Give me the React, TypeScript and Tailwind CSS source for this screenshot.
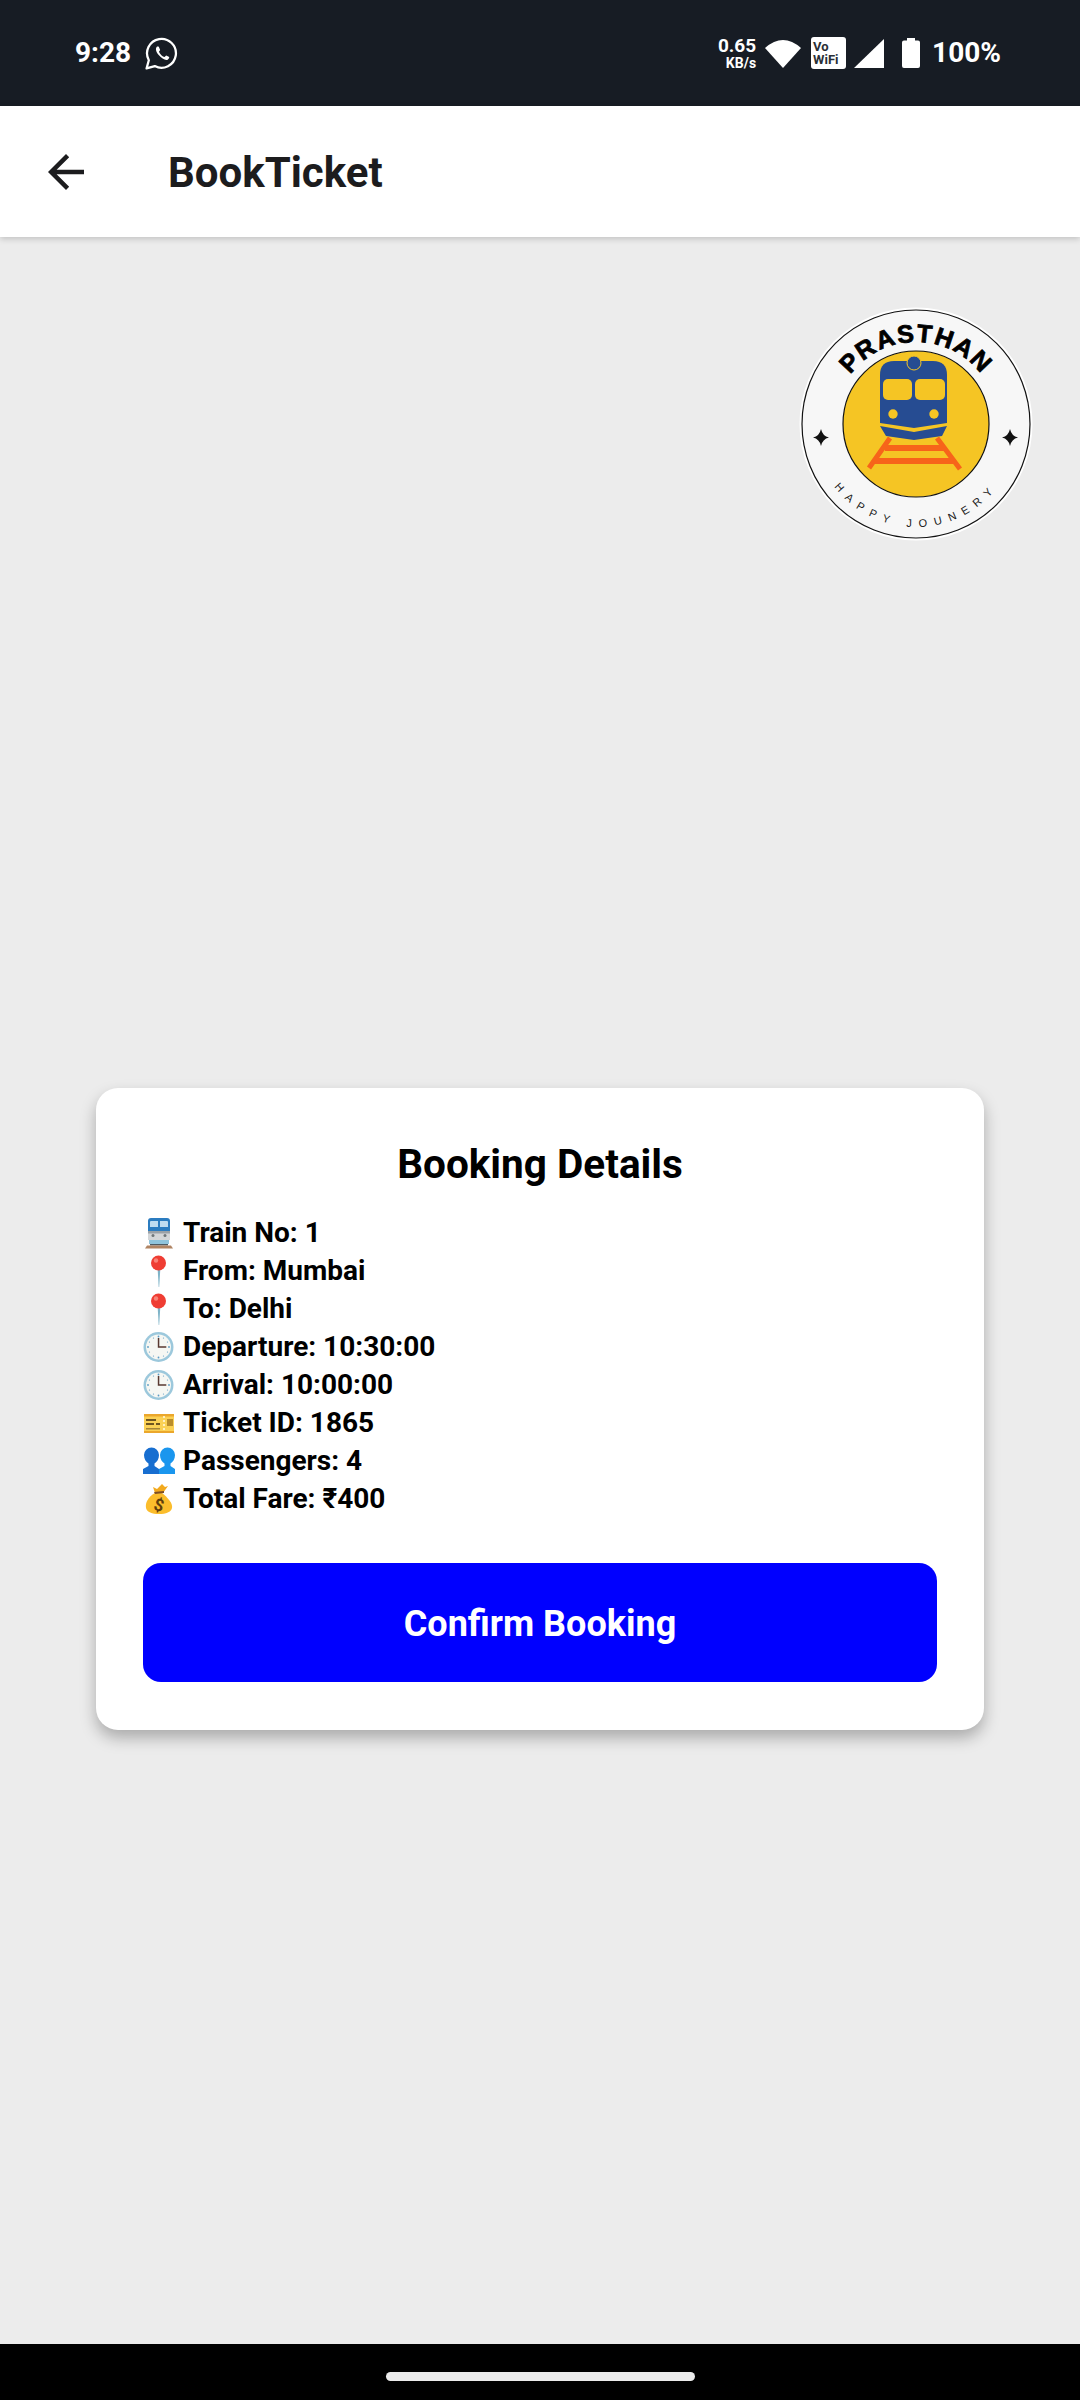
const ROWS = [
  { icon: 'train', label: 'Train No: 1' },
  { icon: 'pin', label: 'From: Mumbai' },
  { icon: 'pin', label: 'To: Delhi' },
  { icon: 'clock', label: 'Departure: 10:30:00' },
  { icon: 'clock', label: 'Arrival: 10:00:00' },
  { icon: 'ticket', label: 'Ticket ID: 1865' },
  { icon: 'people', label: 'Passengers: 4' },
  { icon: 'money', label: 'Total Fare: ₹400' },
];

function RowIcon({ name }: { name: string }) {
  if (name === 'train') {
    return (
      <svg viewBox="0 0 32 32" className="w-[32px] h-[32px]">
        <path d="M5 4q0-3 3-3h16q3 0 3 3v10H5z" fill="#2b7cc0" />
        <path d="M7 5q0-1 1-1h7v6H7zM17 4h7q1 0 1 1v5h-8z" fill="#bfdcf0" />
        <path d="M5 14h22v9H5z" fill="#d3d6d8" />
        <path d="M5 14h22v2.500H5z" fill="#9aa1a6" />
        <circle cx="10" cy="18.500" r="1.500" fill="#6f7679" />
        <circle cx="22" cy="18.500" r="1.500" fill="#6f7679" />
        <path d="M6 23h20v4H6z" fill="#8fc4dc" />
        <path d="M7 27h18v1.500H7z" fill="#4f5b62" />
        <path d="M4 28.500h24l2 3H2z" fill="#b08463" />
      </svg>
    );
  }
  if (name === 'pin') {
    return (
      <svg viewBox="0 0 32 32" className="w-[32px] h-[32px]">
        <path d="M14.600 13h2.800L16.200 32h-.5z" fill="#7fb4c8" />
        <circle cx="15.500" cy="8" r="7.500" fill="#ef3d33" />
        <circle cx="13" cy="5.500" r="2.200" fill="#f88378" />
      </svg>
    );
  }
  if (name === 'clock') {
    return (
      <svg viewBox="0 0 32 32" className="w-[32px] h-[32px]">
        <circle cx="15.500" cy="16" r="15" fill="#9cc8dc" />
        <circle cx="15.500" cy="16" r="12.500" fill="#f6f7f3" />
        <path d="M14.800 7h1.500v8.300h7v1.500h-8.500z" fill="#5a3a32" />
        <g fill="#5b9bc4">
          <circle cx="15.500" cy="5.500" r=".9" />
          <circle cx="15.500" cy="26.500" r=".9" />
          <circle cx="5" cy="16" r=".9" />
          <circle cx="26" cy="16" r=".9" />
          <circle cx="20.500" cy="7" r=".6" />
          <circle cx="24.500" cy="11" r=".6" />
          <circle cx="24.500" cy="21" r=".6" />
          <circle cx="20.500" cy="25" r=".6" />
          <circle cx="10.500" cy="25" r=".6" />
          <circle cx="6.500" cy="21" r=".6" />
          <circle cx="6.500" cy="11" r=".6" />
          <circle cx="10.500" cy="7" r=".6" />
        </g>
      </svg>
    );
  }
  if (name === 'ticket') {
    return (
      <svg viewBox="0 0 32 32" className="w-[32px] h-[32px]">
        <path d="M1 7h30v19H1z" fill="#fbd155" />
        <path d="M1 7h30v2.500H1zM1 24h30v2H1z" fill="#eba72c" />
        <path d="M3 12h10v2H3zM3 16h8v2H3zM13 16h4v2h-4z" fill="#6f5520" />
        <path d="M3 21h14v1.500H3z" fill="#a58538" />
        <path d="M24 12h6v7h-6z" fill="#b98d2d" />
        <g fill="#fff8dc">
          <circle cx="21" cy="10" r="1.100" />
          <circle cx="21" cy="14" r="1.100" />
          <circle cx="21" cy="18" r="1.100" />
          <circle cx="21" cy="22" r="1.100" />
        </g>
      </svg>
    );
  }
  if (name === 'people') {
    return (
      <svg viewBox="0 0 32 32" className="w-[32px] h-[32px]">
        <path d="M17 10a7.500 7.500 0 0 1 15 0c0 4-2 7-4.500 8.500V21l4.500 3v5H16v-5l5.500-3v-2.500C19 17 17 14 17 10z" fill="#1a96ee" />
        <path d="M1 10a7.500 7.500 0 0 1 15 0c0 4-2 7-4.500 8.500V21l4.500 3v5H0v-5l5.500-3v-2.500C3 17 1 14 1 10z" fill="#176ed0" />
      </svg>
    );
  }
  return (
    <svg viewBox="0 0 32 32" className="w-[32px] h-[32px]">
      <path d="M12 10C5 14 2 20 3 25c1 4 6 6 13 6s12-2 13-6c1-5-5-11-10-15z" fill="#fbbd2c" />
      <path d="M10 4l4 2 5-5 3 3 3-1-5 7h-8z" fill="#f2a91d" />
      <path d="M11 9l10-1v2l-9 1z" fill="#7d4e24" />
      <text x="16" y="28" textAnchor="middle" fontSize="17" fontWeight="700" fill="#5e3d0c" fontFamily="Roboto, sans-serif" transform="rotate(15 16 22)">$</text>
    </svg>
  );
}

function Logo() {
  return (
    <svg viewBox="0 0 234 234" className="w-[234px] h-[234px] block">
      <circle cx="117" cy="117" r="116.500" fill="#ffffff" />
      <circle cx="117" cy="117" r="114" fill="#f7f7f7" stroke="#111111" strokeWidth="1.200" />
      <circle cx="117" cy="117" r="73" fill="#f5c524" stroke="#111111" strokeWidth="1.200" />
      <defs>
        <path id="top-arc" d="M 35 117 A 82 82 0 0 1 199 117" />
        <path id="bottom-arc" d="M 14 117 A 103 103 0 0 0 220 117" />
      </defs>
      <text fontFamily="'Liberation Sans', sans-serif" fontWeight="700" fontSize="25" fill="#000000" stroke="#000000" strokeWidth="0.8" letterSpacing="1.600" textAnchor="middle">
        <textPath href="#top-arc" startOffset="50%">PRASTHAN</textPath>
      </text>
      <text fontFamily="'Liberation Sans', sans-serif" fontSize="11" fill="#222222" letterSpacing="7.400" textAnchor="middle">
        <textPath href="#bottom-arc" startOffset="50%">HAPPY JOUNERY</textPath>
      </text>
      <path d="M22 122 q1.500 7 8 8.500 q-6.500 1.500 -8 8.500 q-1.500 -7 -8 -8.500 q6.500 -1.500 8 -8.500z" fill="#111111" />
      <path d="M211 122 q1.500 7 8 8.500 q-6.500 1.500 -8 8.500 q-1.500 -7 -8 -8.500 q6.500 -1.500 8 -8.500z" fill="#111111" />
      <path d="M81 68 q0 -14 14 -14 h39 q14 0 14 14 v48 l-33 5 l-34 -5z" fill="#264c92" />
      <path d="M81 119 l34 6 l33 -6 l-5 10 l-28 4 l-28 -4z" fill="#264c92" />
      <rect x="84" y="72" width="29" height="21" rx="5" fill="#f5c524" />
      <rect x="116" y="72" width="30" height="21" rx="5" fill="#f5c524" />
      <circle cx="115" cy="56" r="7" fill="#264c92" stroke="#f5c524" strokeWidth="1" />
      <circle cx="94" cy="107" r="4.700" fill="#f5c524" />
      <circle cx="135" cy="107" r="4.700" fill="#f5c524" />
      <path d="M91 131 L70 161 M138 131 L161 162" stroke="#f7641a" strokeWidth="5" fill="none" />
      <path d="M86 141 H145 M76 154 H154" stroke="#f7641a" strokeWidth="6" fill="none" />
    </svg>
  );
}

export default function App() {
  return (
    <div className="w-[1080px] h-[2400px] flex flex-col bg-[#ececec] overflow-hidden font-['Roboto',sans-serif]">
      <div className="h-[106px] shrink-0 bg-[#171c24] flex items-center text-white pl-[75px] pr-[79px]">
        <span className="text-[28px] font-bold leading-none">9:28</span>
        <svg viewBox="0 0 32 32" className="w-[33px] h-[33px] ml-[14px]" fill="none" stroke="#ffffff">
          <path d="M1.500 30.500l2.200-8A14 14 0 1 1 9.500 28.200z" strokeWidth="2.200" strokeLinejoin="round" />
          <path d="M11.500 9.500c-1.500 1.500-1.200 4.500 1.800 8s6.500 5.500 8.700 4.500c1-.5 1.500-1.500 1.500-2.500l-3-1.500-1.500 1.500c-2-.5-4.500-3-5.500-5.300l1.200-1.700-1.300-3c-.9-.5-1.500-.5-1.900 0z" fill="#ffffff" stroke="none" />
        </svg>
        <div className="ml-auto flex items-center">
          <div className="flex flex-col items-end font-bold leading-none mr-[9px]">
            <span className="text-[19px]">0.65</span>
            <span className="text-[14px] mt-[1px]">KB/s</span>
          </div>
          <svg viewBox="0 0 36 30" className="w-[36px] h-[30px] mr-[10px]">
            <path d="M0 10Q18 -6 36 10L18 30z" fill="#fff" />
          </svg>
          <div className="w-[35px] h-[32px] bg-white rounded-[3px] text-[#2a2f36] text-[13px] font-bold leading-[13px] pl-[2px] pt-[3px] mr-[8px]">
            Vo<br />WiFi
          </div>
          <svg viewBox="0 0 30 29" className="w-[30px] h-[29px] mr-[18px]">
            <path d="M0 29L30 0V29z" fill="#fff" />
          </svg>
          <svg viewBox="0 0 18 30" className="w-[18px] h-[30px] mr-[12px]">
            <path d="M5 0h8v2.500h3q2 0 2 2V28q0 2-2 2H2q-2 0-2-2V4.500q0-2 2-2h3z" fill="#fff" />
          </svg>
          <span className="text-[28px] font-bold leading-none">100%</span>
        </div>
      </div>

      <div className="h-[131px] shrink-0 bg-white flex items-center pl-[39px] shadow-[0_2px_6px_rgba(0,0,0,0.18)] z-10">
        <svg viewBox="0 0 24 24" className="w-[54px] h-[54px]" fill="#1c1c1e">
          <path d="M20 11H7.830l5.590-5.590L12 4l-8 8 8 8 1.410-1.410L7.830 13H20v-2z" />
        </svg>
        <span className="ml-[75px] pt-[2px] text-[42px] font-bold text-[#1c1c1e] leading-none">BookTicket</span>
      </div>

      <div className="flex-1 flex flex-col">
        <div className="flex justify-end pt-[70px] pr-[47px]">
          <Logo />
        </div>
        <div className="mt-[547px] mx-[96px] h-[642px] bg-white rounded-[22px] px-[47px] pt-[53px] shadow-[0_8px_16px_rgba(0,0,0,0.28)]">
          <h2 className="text-[40.500px] font-bold text-black text-center leading-[46px]">Booking Details</h2>
          <div className="mt-[27px] flex flex-col">
            {ROWS.map((row) => (
              <div key={row.label} className="flex items-center h-[38px]">
                <RowIcon name={row.icon} />
                <span className="ml-[8px] text-[28px] font-bold text-black leading-none">{row.label}</span>
              </div>
            ))}
          </div>
          <button className="mt-[45px] w-full h-[119px] pt-[2px] bg-[#0000ff] rounded-[18px] text-white text-[36px] font-bold">
            Confirm Booking
          </button>
        </div>
      </div>

      <div className="h-[56px] shrink-0 bg-black flex justify-center items-end pb-[19px]">
        <div className="w-[309px] h-[9px] rounded-full bg-[#ebebeb]" />
      </div>
    </div>
  );
}
